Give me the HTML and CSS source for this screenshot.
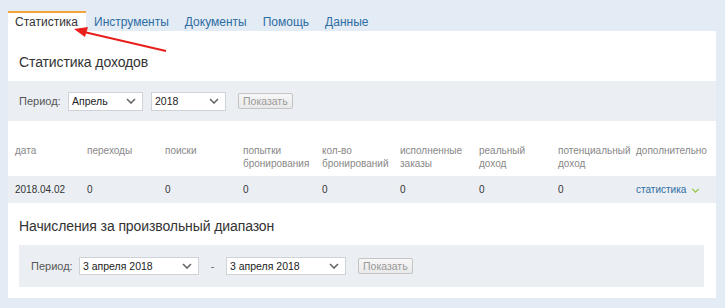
FILE: index.html
```html
<!DOCTYPE html>
<html lang="ru">
<head>
<meta charset="utf-8">
<link rel="stylesheet" href="styles.css">
</head>
<body>
<div class="page">
  <nav class="tabs">
    <span class="tab active">Статистика</span>
    <span class="tab">Инструменты</span>
    <span class="tab">Документы</span>
    <span class="tab">Помощь</span>
    <span class="tab">Данные</span>
  </nav>
  <main class="panel">
    <h2 class="section-title">Статистика доходов</h2>
    <div class="filter filter-wide">
      <span class="label">Период:</span>
      <div class="select sel-month"><span>Апрель</span><svg class="chev" viewBox="0 0 10 6" width="10" height="6"><path d="M1 1 L5 5 L9 1" fill="none" stroke="#666" stroke-width="1.6"/></svg></div>
      <div class="select sel-year"><span>2018</span><svg class="chev" viewBox="0 0 10 6" width="10" height="6"><path d="M1 1 L5 5 L9 1" fill="none" stroke="#666" stroke-width="1.6"/></svg></div>
      <button class="btn" type="button">Показать</button>
    </div>
    <table class="stats">
      <colgroup>
        <col class="c72"><col class="c78"><col class="c78"><col class="c79"><col class="c78"><col class="c79"><col class="c79"><col class="c78"><col class="c87">
      </colgroup>
      <thead>
        <tr>
          <th>дата</th>
          <th>переходы</th>
          <th>поиски</th>
          <th>попытки бронирования</th>
          <th>кол-во бронирований</th>
          <th>исполненные заказы</th>
          <th>реальный доход</th>
          <th>потенциальный доход</th>
          <th>дополнительно</th>
        </tr>
      </thead>
      <tbody>
        <tr>
          <td>2018.04.02</td>
          <td>0</td>
          <td>0</td>
          <td>0</td>
          <td>0</td>
          <td>0</td>
          <td>0</td>
          <td>0</td>
          <td><a class="more" href="#">статистика</a><svg class="more-chev" viewBox="0 0 10 6" width="9" height="5"><path d="M1 1 L5 5 L9 1" fill="none" stroke="#8dc63f" stroke-width="1.4"/></svg></td>
        </tr>
      </tbody>
    </table>
    <h2 class="section-title second">Начисления за произвольный диапазон</h2>
    <div class="filter filter-inset">
      <span class="label">Период:</span>
      <div class="select sel-date"><span>3 апреля 2018</span><svg class="chev" viewBox="0 0 10 6" width="10" height="6"><path d="M1 1 L5 5 L9 1" fill="none" stroke="#666" stroke-width="1.6"/></svg></div>
      <span class="dash">-</span>
      <div class="select sel-date"><span>3 апреля 2018</span><svg class="chev" viewBox="0 0 10 6" width="10" height="6"><path d="M1 1 L5 5 L9 1" fill="none" stroke="#666" stroke-width="1.6"/></svg></div>
      <button class="btn" type="button">Показать</button>
    </div>
  </main>
  <svg class="arrow" width="180" height="60" viewBox="0 0 180 60">
    <line x1="166" y1="51" x2="84" y2="32" stroke="#e8201c" stroke-width="2.2"/>
    <polygon points="74,29 88,27 85,37" fill="#e8201c"/>
  </svg>
</div>
</body>
</html>
```
FILE: styles.css
```css
* { box-sizing: border-box; }
html, body { margin: 0; padding: 0; }
body {
  background: #e3ebf4;
  font-family: "Liberation Sans", Arial, sans-serif;
  color: #333;
  width: 725px;
  height: 308px;
  overflow: hidden;
}
.page {
  position: relative;
  padding: 11px 9px 10px 8px;
}
.tabs {
  display: flex;
  height: 20px;
}
.tab {
  font-size: 12px;
  line-height: 18px;
  padding: 2px 8px 0;
  color: #2e6da4;
}
.tab.active {
  background: #fff;
  color: #333;
  border-top: 2px solid #f2a33a;
  padding: 0 8px 0 7px;
}
.panel {
  background: #fff;
  width: 708px;
  height: 267px;
  padding-bottom: 11px;
}
.section-title {
  margin: 0;
  padding: 21px 0 0 11px;
  font-size: 14px;
  letter-spacing: -0.1px;
  line-height: 20px;
  font-weight: normal;
  color: #333;
}
.section-title.second {
  padding-top: 13px;
}
.filter {
  display: flex;
  align-items: center;
  background: #ebeff3;
}
.filter-wide {
  margin-top: 9px;
  height: 40px;
  padding-left: 11px;
}
.filter-inset {
  margin: 9px 12px 0 11px;
  height: 42px;
  padding-left: 12px;
}
.label {
  font-size: 11px;
  color: #555;
  width: 49px;
  flex: none;
}
.filter-inset .label { width: 48px; }
.select {
  display: flex;
  align-items: center;
  justify-content: space-between;
  background: #fff;
  border: 1px solid #cfd3d7;
  height: 19px;
  padding: 0 6px 0 3px;
  font-size: 10.5px;
  color: #222;
  margin-right: 8px;
  flex: none;
}
.sel-month { width: 75px; }
.sel-year { width: 75px; margin-right: 12px; }
.sel-date { width: 120px; height: 18px; margin-right: 0; }
.dash {
  font-size: 11px;
  color: #666;
  width: 27px;
  text-align: center;
}
.filter-inset .btn { margin-left: 12px; }
.chev { display: block; }
.btn {
  font-family: "Liberation Sans", Arial, sans-serif;
  font-size: 10.5px;
  color: #9a9a9a;
  background: linear-gradient(#f7f7f7, #e9e9e9);
  border: 1px solid #c4c4c4;
  border-radius: 2px;
  height: 16px;
  padding: 0 4px;
  line-height: 14px;
}
.stats {
  width: 708px;
  border-collapse: collapse;
  table-layout: fixed;
  font-size: 10px;
}
.c72 { width: 72px; }
.c78 { width: 78px; }
.c79 { width: 79px; }
.c87 { width: 87px; }
.stats th {
  text-align: left;
  font-weight: normal;
  color: #888;
  vertical-align: top;
  padding: 23px 2px 6px 7px;
  line-height: 13px;
  height: 55px;
}
.stats td {
  background: #ebeff3;
  color: #333;
  padding: 7px 2px 7px 7px;
  line-height: 13px;
  white-space: nowrap;
}
.more {
  color: #2e6da4;
  text-decoration: none;
}
.more-chev { margin-left: 5px; vertical-align: middle; }
.arrow {
  position: absolute;
  left: 0;
  top: 0;
  pointer-events: none;
}
```
